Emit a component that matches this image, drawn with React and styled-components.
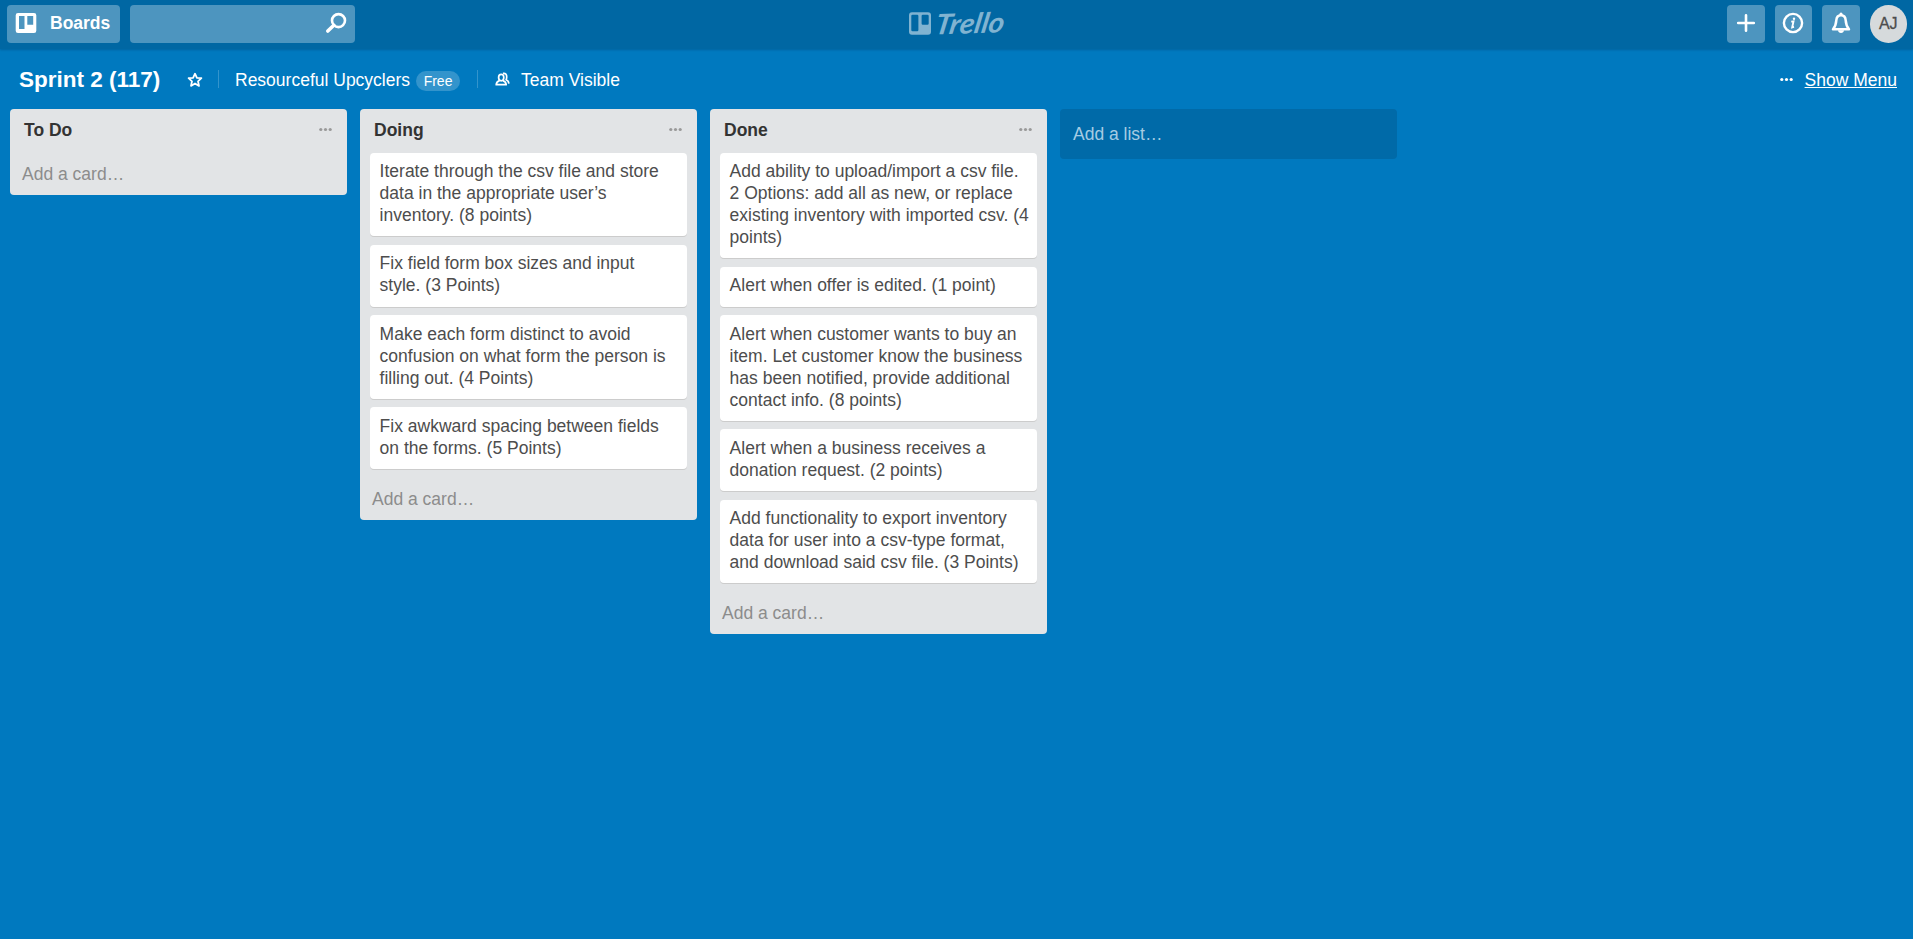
import React from "react";
import styled, { createGlobalStyle } from "styled-components";

const GlobalStyle = createGlobalStyle`
  * { box-sizing: border-box; }
  body {
    margin: 0;
    background: #0079bf;
    font-family: "Liberation Sans", Arial, Helvetica, sans-serif;
    font-size: 17.5px;
    line-height: 22px;
    color: #4d4d4d;
  }
  svg { display: block; flex: none; overflow: visible; }
`;

const Page = styled.div`
  display: flex;
  flex-direction: column;
  min-height: 100vh;
`;

const TopBar = styled.header`
  display: grid;
  grid-template-columns: 1fr auto 1fr;
  height: 49px;
  padding: 0 6px 0 7px;
  background: #0067a3;
  box-shadow: 0 1px 2px rgba(0, 60, 100, 0.35);
`;

const BarGroup = styled.div`
  display: flex;
  align-items: flex-start;
  padding-top: 5px;
  gap: ${(p) => p.$gap}px;
  justify-content: ${(p) => (p.$end ? "flex-end" : "flex-start")};
`;

const BarButton = styled.button`
  display: flex;
  align-items: center;
  justify-content: ${(p) => (p.$wide ? "flex-start" : "center")};
  width: ${(p) => (p.$wide ? "113px" : "37.5px")};
  height: 38px;
  padding: ${(p) => (p.$wide ? "0 0 2px 8px" : "0 0 2px")};
  gap: 13px;
  border: 0;
  border-radius: 4px;
  background: #4d95bf;
  color: #fff;
  font: bold 17.5px/22px "Liberation Sans", Arial, sans-serif;
`;

const SearchBox = styled.div`
  display: flex;
  align-items: flex-start;
  justify-content: flex-end;
  width: 225px;
  height: 38px;
  padding: 7px 8px 0 0;
  border-radius: 4px;
  background: #4d95bf;
`;

const Avatar = styled.div`
  width: 37.5px;
  height: 37.5px;
  border-radius: 50%;
  background: #d6dadc;
  color: #4d4d4d;
  font-size: 16px;
  line-height: 37.5px;
  text-align: center;
`;

const AvatarInitials = styled.span`
  -webkit-text-stroke: 0.3px #4d4d4d;
`;

const Brand = styled.div`
  width: 100px;
  height: 49px;
  margin-left: -1px;
`;

const BoardHeader = styled.div`
  display: flex;
  align-items: center;
  height: 60px;
  padding: 1px 16px 0 19px;
  color: #fff;
`;

const BoardTitle = styled.h1`
  margin: 0;
  width: 168px;
  font-size: 22.5px;
  line-height: 30px;
  font-weight: bold;
`;

const Divider = styled.span`
  width: 1px;
  height: 18px;
  margin: ${(p) => p.$margin};
  background: #3394cc;
`;

const Badge = styled.span`
  height: 20px;
  margin: 2px 0 0 6px;
  padding: 0 7.6px;
  border-radius: 10px;
  background: #3394cc;
  font-size: 14px;
  line-height: 20px;
`;

const HeaderLabel = styled.span`
  margin-left: ${(p) => p.$left || 0}px;
  white-space: nowrap;
`;

const ShowMenu = styled.a`
  display: flex;
  align-items: center;
  gap: 12px;
  margin-left: auto;
  color: #fff;
`;

const ShowMenuText = styled.span`
  text-decoration: underline;
`;

const Board = styled.main`
  display: flex;
  align-items: flex-start;
  gap: 13px;
  padding: 0 10px;
`;

const List = styled.section`
  width: 337px;
  border-radius: 4px;
  background: #e2e4e6;
`;

const ListHeader = styled.div`
  display: flex;
  justify-content: space-between;
  height: 43.9px;
  padding: 10px 15px 0 14px;
`;

const ListTitle = styled.h2`
  margin: 0;
  font-size: 17.5px;
  line-height: 22px;
  font-weight: bold;
  color: #333;
`;

const Cards = styled.div`
  display: flex;
  flex-direction: column;
  gap: 8.64px;
  padding: 0 10px 9px;
`;

const Card = styled.article`
  padding: 7.35px 7px 10.2px 9.6px;
  border-radius: 4px;
  background: #fff;
  box-shadow: 0 1px 0 #ccc;
`;

const AddCard = styled.div`
  height: 42px;
  padding: 10px 12px 0;
  color: #8c8c8c;
`;

const AddList = styled.div`
  width: 337px;
  height: 50px;
  padding: 14px 13px;
  border-radius: 4px;
  background: #006aa8;
  color: #a6cce3;
`;

const Dots = ({ color }) => (
  <svg width="13" height="22" viewBox="0 0 13 22" fill={color}>
    <circle cx="1.8" cy="10.5" r="1.6" />
    <circle cx="6.5" cy="10.5" r="1.6" />
    <circle cx="11.2" cy="10.5" r="1.6" />
  </svg>
);

const BoardsIcon = () => (
  <svg width="22" height="22" viewBox="0 0 22 22">
    <path
      fill="#fff"
      fillRule="evenodd"
      d="M3 1H19Q21.3 1 21.3 3.3V18.7Q21.3 21 19 21H3Q.7 21 .7 18.7V3.3Q.7 1 3 1ZM4 4V17H9.5V4ZM12.3 4V12.7H18.2V4Z"
    />
  </svg>
);

const SearchIcon = () => (
  <svg width="22" height="22" viewBox="0 0 22 22" fill="none" stroke="#fff">
    <circle cx="13.5" cy="8.6" r="6.5" strokeWidth="2.6" />
    <path d="M8.8 13.3L2.8 19" strokeWidth="3.6" strokeLinecap="round" />
  </svg>
);

const PlusIcon = () => (
  <svg width="20" height="20" viewBox="0 0 20 20" stroke="#fff" strokeWidth="2.6" strokeLinecap="round">
    <path d="M10 2.2V17.8M2.2 10H17.8" />
  </svg>
);

const InfoIcon = () => (
  <svg width="22" height="22" viewBox="0 0 22 22" fill="none" stroke="#fff">
    <circle cx="11" cy="11" r="9.1" strokeWidth="2.4" />
    <path d="M9.2 9.6L11.5 9.4L10.2 15.4L12 14.9" strokeWidth="1.9" />
    <circle cx="12" cy="6.7" r="1.2" fill="#fff" stroke="none" />
  </svg>
);

const BellIcon = () => (
  <svg width="20" height="22" viewBox="0 0 20 22" fill="none" stroke="#fff" strokeWidth="2.5" strokeLinejoin="round">
    <path d="M10 3.2C6.8 3.2 5.5 5.5 5.3 8.4C5.1 12.2 4.4 14.4 2 17.2H18C15.6 14.4 14.9 12.2 14.7 8.4C14.5 5.5 13.2 3.2 10 3.2Z" />
    <circle cx="10" cy="2.2" r="1.6" fill="#fff" stroke="none" />
    <path d="M7 18.2H13Q12.6 20.9 10 20.9Q7.4 20.9 7 18.2Z" fill="#fff" stroke="none" />
  </svg>
);

const StarIcon = () => (
  <svg width="16" height="16" viewBox="0 0 16 16" fill="none" stroke="#fff" strokeWidth="1.8" strokeLinejoin="round">
    <path d="M8 1.7L9.9 5.8L14.4 6.2L11 9.3L12 13.9L8 11.5L4 13.9L5 9.3L1.6 6.2L6.1 5.8Z" />
  </svg>
);

const TeamIcon = () => (
  <svg width="15" height="15" viewBox="0 0 15 15" fill="none" stroke="#fff" strokeWidth="1.7" strokeLinejoin="round">
    <ellipse cx="6.2" cy="5.6" rx="2.6" ry="3.2" />
    <path d="M4.6 8.6Q1.4 9.5 1.2 12.7H11.2Q11 9.5 7.8 8.6" />
    <path d="M8 1.4Q11.9 .9 11.7 5Q11.6 7 11.1 7.8Q13.7 8.8 13.9 11.6" />
  </svg>
);

const TrelloLogo = () => (
  <svg width="100" height="49" viewBox="0 -5 100 49" fill="#80b3d1">
    <path
      fillRule="evenodd"
      d="M5 7.3H21Q24 7.3 24 10.3V26.7Q24 29.7 21 29.7H5Q2 29.7 2 26.7V10.3Q2 7.3 5 7.3ZM5.5 9.8Q4.3 9.8 4.3 11V25Q4.3 26.2 5.5 26.2H10.2Q11.4 26.2 11.4 25V11Q11.4 9.8 10.2 9.8ZM15.8 9.8Q14.6 9.8 14.6 11V18.5Q14.6 19.7 15.8 19.7H20.5Q21.7 19.7 21.7 18.5V11Q21.7 9.8 20.5 9.8Z"
    />
    <text
      x="0"
      y="0"
      transform="translate(27 29.5) rotate(-2) skewX(-12)"
      fontFamily="Lato, sans-serif"
      fontStyle="italic"
      fontWeight="700"
      fontSize="28"
      textLength="69"
      lengthAdjust="spacingAndGlyphs"
    >
      Trello
    </text>
  </svg>
);

const lists = [
  { title: "To Do", cards: [] },
  {
    title: "Doing",
    cards: [
      "Iterate through the csv file and store data in the appropriate user’s inventory. (8 points)",
      "Fix field form box sizes and input style. (3 Points)",
      "Make each form distinct to avoid confusion on what form the person is filling out. (4 Points)",
      "Fix awkward spacing between fields on the forms. (5 Points)",
    ],
  },
  {
    title: "Done",
    cards: [
      "Add ability to upload/import a csv file. 2 Options: add all as new, or replace existing inventory with imported csv. (4 points)",
      "Alert when offer is edited. (1 point)",
      "Alert when customer wants to buy an item. Let customer know the business has been notified, provide additional contact info. (8 points)",
      "Alert when a business receives a donation request. (2 points)",
      "Add functionality to export inventory data for user into a csv-type format, and download said csv file. (3 Points)",
    ],
  },
];

export default function App() {
  return (
    <Page>
      <GlobalStyle />
      <TopBar>
        <BarGroup $gap={10}>
          <BarButton $wide>
            <BoardsIcon />
            Boards
          </BarButton>
          <SearchBox>
            <SearchIcon />
          </SearchBox>
        </BarGroup>
        <Brand>
          <TrelloLogo />
        </Brand>
        <BarGroup $gap={10} $end>
          <BarButton aria-label="Create">
            <PlusIcon />
          </BarButton>
          <BarButton aria-label="Information">
            <InfoIcon />
          </BarButton>
          <BarButton aria-label="Notifications">
            <BellIcon />
          </BarButton>
          <Avatar>
            <AvatarInitials>AJ</AvatarInitials>
          </Avatar>
        </BarGroup>
      </TopBar>
      <BoardHeader>
        <BoardTitle>Sprint 2 (117)</BoardTitle>
        <StarIcon />
        <Divider $margin="0 16px 2px 15px" />
        <HeaderLabel>Resourceful Upcyclers</HeaderLabel>
        <Badge>Free</Badge>
        <Divider $margin="0 17px 2px 17px" />
        <TeamIcon />
        <HeaderLabel $left={11}>Team Visible</HeaderLabel>
        <ShowMenu>
          <Dots color="#fff" />
          <ShowMenuText>Show Menu</ShowMenuText>
        </ShowMenu>
      </BoardHeader>
      <Board>
        {lists.map((list) => (
          <List key={list.title}>
            <ListHeader>
              <ListTitle>{list.title}</ListTitle>
              <Dots color="#999" />
            </ListHeader>
            {list.cards.length > 0 && (
              <Cards>
                {list.cards.map((text) => (
                  <Card key={text}>{text}</Card>
                ))}
              </Cards>
            )}
            <AddCard>Add a card…</AddCard>
          </List>
        ))}
        <AddList>Add a list…</AddList>
      </Board>
    </Page>
  );
}
